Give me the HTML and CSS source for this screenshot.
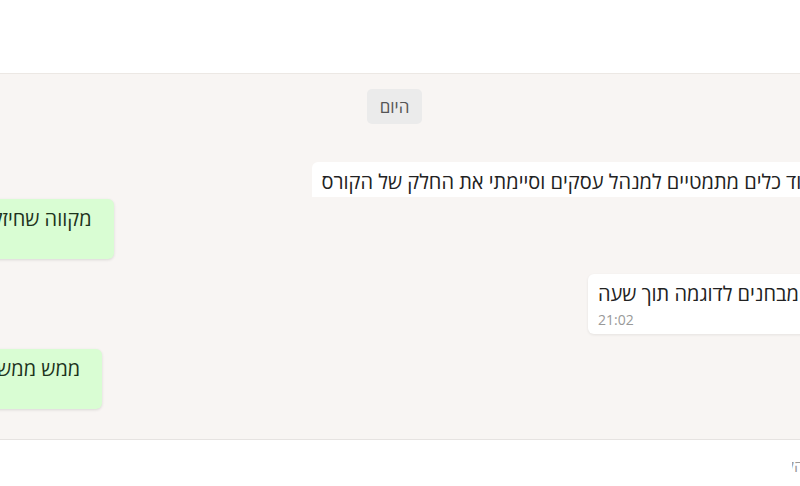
FILE: index.html
```html
<!DOCTYPE html>
<html lang="he" dir="rtl">
<head>
<meta charset="utf-8">
<title>צ'אט</title>
<link rel="stylesheet" href="styles.css">
</head>
<body>
<div class="app">
  <header class="topbar"></header>
  <main class="chat">
    <div class="thread">
      <div class="day"><span class="day-chip">היום</span></div>
      <div class="msg msg-in msg-clipped">
        <p class="msg-text">ערב טוב התחלתי היום ללמוד כלים מתמטיים למנהל עסקים וסיימתי את החלק של הקורס</p>
      </div>
      <div class="msg msg-out">
        <p class="msg-text">מקווה שחיזקת את ההבנה שלך בנושאים</p>
        <span class="msg-time">21:01</span>
      </div>
      <div class="msg msg-in">
        <p class="msg-text">אתמול הספקתי לפתור שני מבחנים לדוגמה תוך שעה</p>
        <span class="msg-time">21:02</span>
      </div>
      <div class="msg msg-out">
        <p class="msg-text">ממש ממש כל הכבוד, התקדמות מעולה</p>
        <span class="msg-time">21:03</span>
      </div>
    </div>
  </main>
  <footer class="composer">
    <div class="composer-field">הקלד הודעה...</div>
  </footer>
</div>
</body>
</html>
```
FILE: styles.css
```css
* { box-sizing: border-box; }

html, body {
  margin: 0;
  padding: 0;
  width: 800px;
  height: 486px;
  overflow: hidden;
  background: #ffffff;
}

body {
  font-family: "Open Sans", "DejaVu Sans", sans-serif;
  color: #222;
}

.app {
  display: flex;
  flex-direction: column;
  height: 486px;
  overflow: hidden;
}

.topbar {
  height: 74px;
  flex: none;
  background: #ffffff;
  border-bottom: 1px solid #ece8e4;
}

.chat {
  height: 365px;
  flex: none;
  background: #f8f5f3;
  overflow: hidden;
}

.thread {
  display: flex;
  flex-direction: column;
  align-items: flex-start;
  margin: 0 -240px 0 -251px;
  padding: 15px 16px 20px;
}

.day {
  align-self: stretch;
  display: flex;
  justify-content: center;
  margin-bottom: 38px;
}

.day-chip {
  background: #ebebeb;
  color: #555;
  font-size: 17px;
  line-height: 19px;
  padding: 8px 13px;
  border-radius: 5px;
}

.msg {
  display: flex;
  flex-direction: column;
  padding: 8px 10px 6px 10px;
  border-radius: 6px;
  margin-bottom: 15px;
  background: #ffffff;
  box-shadow: 0 1px 3px rgba(0, 0, 0, 0.08);
}

.msg-text {
  margin: 0;
  font-size: 20px;
  line-height: 24px;
  white-space: nowrap;
}

.msg-time {
  margin-top: 6px;
  font-size: 14px;
  line-height: 16px;
  color: #999;
  align-self: flex-end;
}

.msg-in {
  align-self: flex-start;
}

.msg-out {
  align-self: flex-end;
  background: #d9fdd3;
  color: #1d331c;
  padding-right: 22px;
  box-shadow: 0 1px 3px rgba(0, 0, 0, 0.12);
}

.msg-clipped {
  height: 35px;
  overflow: hidden;
  border-radius: 6px 6px 0 0;
  box-shadow: none;
  margin-bottom: 2px;
}

.composer {
  flex: 1;
  background: #ffffff;
  border-top: 1px solid #e6e3e1;
  display: flex;
  align-items: center;
  margin-right: -20px;
  padding: 6px 16px 0 0;
}

.composer-field {
  width: 12px;
  overflow: hidden;
  font-size: 16px;
  line-height: 20px;
  color: #9a9a9a;
  white-space: nowrap;
}
```
